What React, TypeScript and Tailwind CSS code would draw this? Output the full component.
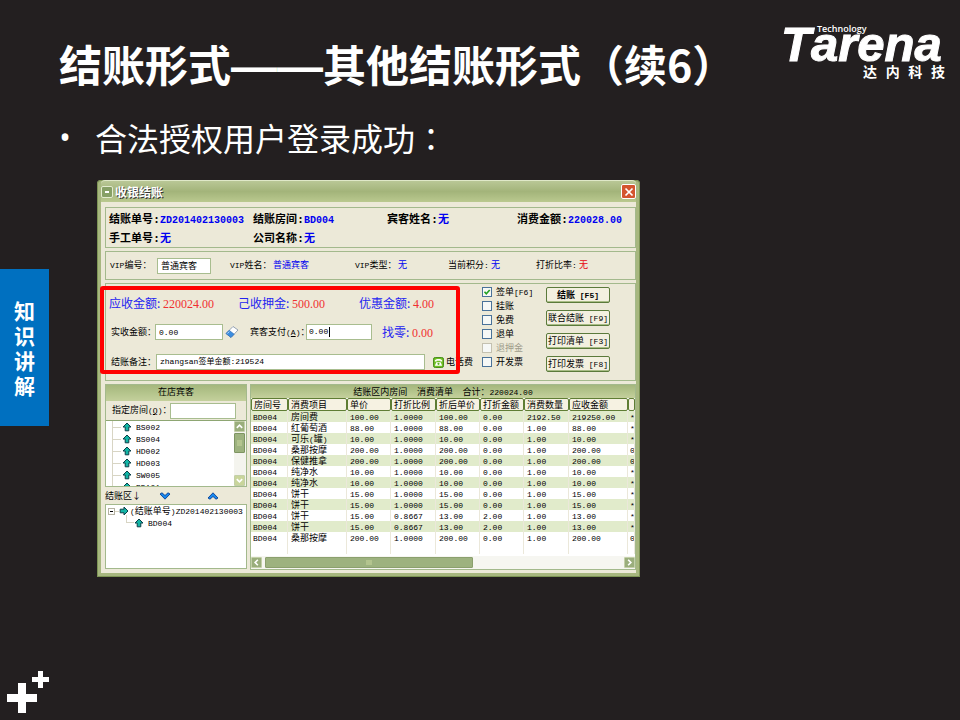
import React from "react";

const SMALL = "text-[9px] leading-3";

/** Splits a string so Latin runs use the narrow monospaced face and Chinese runs the CJK one. */
function Mixed({ text }: { text: string }) {
  const parts = text.match(/[\x20-\x7e]+|[^\x20-\x7e]+/g) ?? [];
  return (
    <>
      {parts.map((p, i) =>
        /^[\x20-\x7e]/.test(p) ? (
          <span key={i} className="whitespace-pre font-['Liberation_Mono',monospace] text-[8px]">
            {p}
          </span>
        ) : (
          <span key={i}>{p}</span>
        ),
      )}
    </>
  );
}

function Logo() {
  return (
    <div className="relative w-[164px] shrink-0 text-white" aria-label="Tarena Technology 达内科技">
      <div className="flex items-baseline font-['Liberation_Sans',sans-serif] text-[49px] font-bold italic leading-[38px] [-webkit-text-stroke:1px_white]">
        <span>T</span>
        <span>arena</span>
      </div>
      <span className="absolute left-[36px] top-0 font-['Open_Sans',sans-serif] text-[9px] font-semibold leading-[8px]">
        Technology
      </span>
      <div className="ml-auto flex w-[82px] justify-between text-[14px] font-bold leading-[16px]">
        <span>达</span>
        <span>内</span>
        <span>科</span>
        <span>技</span>
      </div>
    </div>
  );
}

const summary = [
  { label: "结账单号:", value: "ZD201402130003" },
  { label: "结账房间:", value: "BD004" },
  { label: "宾客姓名:", value: "无" },
  { label: "消费金额:", value: "220028.00" },
  { label: "手工单号:", value: "无" },
  { label: "公司名称:", value: "无" },
];

function Summary() {
  return (
    <section className="grid h-[41px] grid-cols-[144px_134px_130px_1fr] border border-[#a3b98c] px-[3px] py-px text-[11px] font-bold leading-[18px]">
      {summary.map((s) => (
        <div key={s.label} className="flex h-[18px] items-baseline whitespace-nowrap">
          <span className="text-black">{s.label.slice(0, -1)}</span>
          <span className="w-[7px] text-center">:</span>
          <span className={s.value === "无" ? "text-[#0000f0]" : "font-['Liberation_Mono',monospace] text-[10px] text-[#0000f0]"}>
            {s.value}
          </span>
        </div>
      ))}
    </section>
  );
}

function VipRow() {
  return (
    <section className={`grid h-[29px] grid-cols-[120px_125px_93px_88px_1fr] items-center border border-[#a3b98c] pl-1 ${SMALL}`}>
      <div className="flex items-center">
        <label htmlFor="vip-no" className="w-[47px]"><Mixed text="VIP编号：" /></label>
        <input id="vip-no" defaultValue="普通宾客" className="h-4 w-[54px] border border-[#a8bd8f] bg-white px-[3px] outline-none" />
      </div>
      <div className="flex"><span className="w-[43px]"><Mixed text="VIP姓名：" /></span><span className="text-[#0000f0]">普通宾客</span></div>
      <div className="flex"><span className="w-[43px]"><Mixed text="VIP类型：" /></span><span className="text-[#0000f0]">无</span></div>
      <div className="flex"><span className="w-[43px]"><Mixed text="当前积分:" /></span><span className="text-[#0000f0]">无</span></div>
      <div className="flex"><span className="w-[43px]"><Mixed text="打折比率:" /></span><span className="text-red-600">无</span></div>
    </section>
  );
}

function Amount({ label, value }: { label: string; value: string }) {
  return (
    <div className="flex items-baseline whitespace-nowrap text-[12px] leading-4">
      <span className="text-[#2424f0]">{label}</span>
      <span className="w-[6px] text-[#2424f0]">:</span>
      <span className="font-['Liberation_Serif',serif] text-[12px] text-[#f03030]">{value}</span>
    </div>
  );
}

function EraserIcon() {
  return (
    <svg viewBox="0 0 14 14" className="h-[14px] w-[14px]" aria-hidden="true">
      <path d="M1 8.5 8 1.5l5 3.5-7 7.5z" fill="#fff" stroke="#7c8ea6" strokeWidth="0.8" />
      <path d="M1 8.5 4.2 5.3l5 3.9L6 12.5z" fill="#3b8ee0" stroke="#2a64ab" strokeWidth="0.6" />
      <path d="m2.4 8.5 1.9-1.9" stroke="#b9dcff" />
    </svg>
  );
}

function PhoneIcon() {
  return (
    <svg viewBox="0 0 12 12" className="h-[11px] w-[11px]" aria-hidden="true">
      <rect x="0.5" y="0.5" width="11" height="11" rx="2" fill="#6fbf22" stroke="#3c8410" />
      <path d="M2 5V3.8C3.6 1.8 8.4 1.8 10 3.8V5H8V4.2H4V5z" fill="#fff" />
      <path d="M3.6 5.6h4.8L10 9.5H2z" fill="#fff" />
      <circle cx="6" cy="7.4" r="1.2" fill="#5aad1c" />
    </svg>
  );
}

const field = "h-4 border border-[#a8bd8f] bg-white px-[3px] font-['Liberation_Mono',monospace] text-[8px] leading-3 outline-none";

const options = [
  { id: "sign", label: "签单[F6]", checked: true },
  { id: "credit", label: "挂账" },
  { id: "free", label: "免费" },
  { id: "refund", label: "退单" },
  { id: "deposit", label: "退押金", disabled: true },
  { id: "invoice", label: "开发票" },
];

const actions = ["结账 [F5]", "联合结账 [F9]", "打印清单 [F3]", "打印发票 [F8]"];

function Payment() {
  return (
    <section className="flex h-[98px] border border-[#a3b98c]">
      <div className={`w-[376px] pl-[3px] ${SMALL}`}>
        <div className="mt-[11px] grid h-4 grid-cols-[129px_121px_1fr]">
          <Amount label="应收金额" value="220024.00" />
          <Amount label="己收押金" value="500.00" />
          <Amount label="优惠金额" value="4.00" />
        </div>
        <div className="mt-[13px] flex h-4 items-center pl-[2px]">
          <label htmlFor="paid" className="w-11 whitespace-nowrap">实收金额：</label>
          <input id="paid" defaultValue="0.00" className={`${field} w-[68px]`} />
          <span className="ml-[2px] w-[25px]"><EraserIcon /></span>
          <label htmlFor="guest-pay" className="w-14 whitespace-nowrap">
            宾客支付<span className="font-['Liberation_Mono',monospace] text-[8px]">(<u>A</u>)</span>：
          </label>
          <span className="flex h-4 w-[66px] items-center border border-[#a8bd8f] bg-white pl-[2px]">
            <input id="guest-pay" defaultValue="0.00" className="h-3 w-5 font-['Liberation_Mono',monospace] text-[8px] outline-none" />
            <span className="h-[10px] w-px bg-black" />
          </span>
          <span className="ml-[10px]"><Amount label="找零" value="0.00" /></span>
        </div>
        <div className="mt-[14px] flex h-4 items-center pl-[2px]">
          <label htmlFor="remark" className="w-[45px] whitespace-nowrap">结账备注：</label>
          <div className="flex h-4 w-[269px] items-center border border-[#a8bd8f] bg-white px-[3px]">
            <input id="remark" defaultValue="zhangsan签单金额:219524" className="h-3 w-full font-['Liberation_Mono','Noto_Sans_CJK_SC',monospace] text-[8px] leading-3 outline-none" />
          </div>
          <span className="ml-2 flex items-center gap-[2px] whitespace-nowrap"><PhoneIcon />电话费</span>
        </div>
      </div>
      <div className={`w-16 pt-px ${SMALL}`}>
        {options.map((o) => (
          <label key={o.id} htmlFor={o.id} className={`flex h-[14px] items-center gap-1 whitespace-nowrap ${o.disabled ? "text-[#a09d8c]" : ""}`}>
            <span className="relative flex h-[10px] w-[10px]">
              <input
                id={o.id}
                type="checkbox"
                defaultChecked={o.checked}
                disabled={o.disabled}
                className="peer h-[10px] w-[10px] appearance-none border border-[#4a7299] bg-[#f6f8f6] disabled:border-[#c4c1b0]"
              />
              <svg viewBox="0 0 10 10" className="pointer-events-none absolute inset-0 hidden peer-checked:block" aria-hidden="true">
                <path d="M2.5 4.8 4.3 6.8 7.7 3" fill="none" stroke="#21a121" strokeWidth="1.6" />
              </svg>
            </span>
            <span><Mixed text={o.label} /></span>
          </label>
        ))}
      </div>
      <div className="flex w-16 flex-col gap-[7px] pt-[3px]">
        {actions.map((a, i) => (
          <button
            key={a}
            type="button"
            className={`h-4 whitespace-nowrap rounded-[2px] border border-[#5b7a3b] bg-[#f3f0e0] shadow-[inset_0_-1px_0_#a9bd86] ${SMALL} ${i === 0 ? "font-bold" : ""}`}
          >
            <Mixed text={a} />
          </button>
        ))}
      </div>
    </section>
  );
}

function ArrowIcon({ right = false }: { right?: boolean }) {
  return (
    <svg viewBox="0 0 10 10" className={`h-[10px] w-[10px] shrink-0 ${right ? "rotate-90" : ""}`} aria-hidden="true">
      <path d="M5 1 9 5H6.8V8.8H3.2V5H1z" fill="#12b5a5" stroke="#0a3f48" strokeWidth="1" />
    </svg>
  );
}

function Chevron({ dir, className = "" }: { dir: "up" | "down" | "left" | "right"; className?: string }) {
  const d = { up: "M2 6.5 5 3.5 8 6.5", down: "M2 3.5 5 6.5 8 3.5", left: "M6.5 2 3.5 5 6.5 8", right: "M3.5 2 6.5 5 3.5 8" }[dir];
  return (
    <svg viewBox="0 0 10 10" className={className} aria-hidden="true">
      <path d={d} fill="none" stroke="currentColor" strokeWidth="1.8" />
    </svg>
  );
}

function ScrollButton({ dir, light = false }: { dir: "up" | "down" | "left" | "right"; light?: boolean }) {
  return (
    <button type="button" aria-label={dir} className={`flex h-[11px] w-[11px] shrink-0 items-center justify-center rounded-[1px] border border-[#c3cfa8] text-white ${light ? "bg-[#c9d59b]" : "bg-[#9aae7c]"}`}>
      <Chevron dir={dir} className="h-[9px] w-[9px]" />
    </button>
  );
}

const rooms = ["BS002", "BS004", "HD002", "HD003", "SW005", "BD101"];
const panelHead = "bg-linear-to-b from-[#a5b77d] via-[#b4c48c] to-[#c4d09c] text-center text-[9px]";

function GuestPanel() {
  return (
    <section className={`flex w-[142px] shrink-0 flex-col ${SMALL}`}>
      <div className="border border-[#a3b98c]">
        <h3 className={`${panelHead} h-4 leading-[14px]`}>在店宾客</h3>
        <div className="flex h-[19px] items-center pl-[6px]">
          <label htmlFor="room" className="w-[58px] whitespace-nowrap">
            指定房间<span className="font-['Liberation_Mono',monospace] text-[8px]">(<u>Q</u>)</span>：
          </label>
          <input id="room" className={`${field} w-[66px]`} />
        </div>
        <div className="flex h-[66px] overflow-hidden border-t border-[#8ea673] bg-white">
          <ul className="ml-[6px] flex-1 border-l border-[#d8d5c4]">
            {rooms.map((r) => (
              <li key={r} className="flex h-3 items-center">
                <span className="mr-px h-px w-2 bg-[#d8d5c4]" />
                <ArrowIcon />
                <span className="ml-1"><Mixed text={r} /></span>
              </li>
            ))}
          </ul>
          <div className="flex w-3 flex-col bg-[#f4f4ee]">
            <ScrollButton dir="up" />
            <div className="mt-px flex h-5 w-[11px] items-center justify-center rounded-[1px] border border-[#7e9462] bg-[#9db27f]">
              <span className="h-[6px] w-[5px] bg-[#b3c48e]" />
            </div>
            <div className="mt-auto"><ScrollButton dir="down" light /></div>
          </div>
        </div>
      </div>
      <div className="flex h-[17px] items-center">
        <span className="w-[54px]">结账区↓</span>
        <button type="button" aria-label="移下" className="w-12">
          <svg viewBox="0 0 12 8" className="h-2 w-3"><path d="M1 2 3 .8 6 3.5 9 .8 11 2 6 7.2z" fill="#1688ee" stroke="#0a3f94" strokeWidth=".9" /></svg>
        </button>
        <button type="button" aria-label="移上">
          <svg viewBox="0 0 12 8" className="h-2 w-3"><path d="M1 6 3 7.2 6 4.5 9 7.2 11 6 6 .8z" fill="#1688ee" stroke="#0a3f94" strokeWidth=".9" /></svg>
        </button>
      </div>
      <ul className="h-[65px] overflow-hidden border border-[#a3b98c] bg-white">
        <li className="flex h-3 items-center whitespace-nowrap pl-[2px]">
          <span className="flex h-[7px] w-[7px] shrink-0 items-center justify-center border border-[#b5b2a2]"><span className="h-px w-[3px] bg-black" /></span>
          <span className="h-px w-1 bg-[#d8d5c4]" />
          <ArrowIcon right />
          <span className="ml-px"><Mixed text="(结账单号)ZD201402130003" /></span>
        </li>
        <li className="flex h-3 items-center pl-5">
          <span className="-mt-2 h-2 w-2 border-b border-l border-[#d8d5c4]" />
          <ArrowIcon />
          <span className="ml-1"><Mixed text="BD004" /></span>
        </li>
      </ul>
    </section>
  );
}

const columns = ["房间号", "消费项目", "单价", "打折比例", "折后单价", "打折金额", "消费数量", "应收金额", ""];
const rows = [
  ["房间费", "100.00", "1.0000", "100.00", "0.00", "2192.50", "219250.00", "*"],
  ["红葡萄酒", "88.00", "1.0000", "88.00", "0.00", "1.00", "88.00", "*"],
  ["可乐(罐)", "10.00", "1.0000", "10.00", "0.00", "1.00", "10.00", "*"],
  ["桑那按摩", "200.00", "1.0000", "200.00", "0.00", "1.00", "200.00", "0"],
  ["保健推拿", "200.00", "1.0000", "200.00", "0.00", "1.00", "200.00", "0"],
  ["纯净水", "10.00", "1.0000", "10.00", "0.00", "1.00", "10.00", "*"],
  ["纯净水", "10.00", "1.0000", "10.00", "0.00", "1.00", "10.00", "*"],
  ["饼干", "15.00", "1.0000", "15.00", "0.00", "1.00", "15.00", "*"],
  ["饼干", "15.00", "1.0000", "15.00", "0.00", "1.00", "15.00", "*"],
  ["饼干", "15.00", "0.8667", "13.00", "2.00", "1.00", "13.00", "*"],
  ["饼干", "15.00", "0.8667", "13.00", "2.00", "1.00", "13.00", "*"],
  ["桑那按摩", "200.00", "1.0000", "200.00", "0.00", "1.00", "200.00", "0"],
  ["", "", "", "", "", "", "", ""],
];

function BillPanel() {
  return (
    <section className="flex min-w-0 flex-1 flex-col border border-[#a3b98c] bg-white">
      <h3 className={`${panelHead} h-[13px] whitespace-pre leading-[13px]`}>
        <Mixed text="结账区内房间  消费清单  合计：220024.00" />
      </h3>
      <table className="w-full table-fixed border-separate border-spacing-0 text-left text-[9px] leading-[11px]">
        <colgroup>
          <col className="w-[37px]" />
          <col className="w-[59px]" />
          <col className="w-[44px]" />
          <col className="w-[45px]" />
          <col className="w-[44px]" />
          <col className="w-[44px]" />
          <col className="w-[45px]" />
          <col className="w-[59px]" />
          <col />
        </colgroup>
        <thead>
          <tr className="h-[13px]">
            {columns.map((c, i) => (
              <th key={i} scope="col" className="h-[13px] overflow-hidden whitespace-nowrap rounded-[2px] border border-[#5f7d34] bg-[#f6f2e2] p-0 pl-[2px] font-normal">
                {c}
              </th>
            ))}
          </tr>
        </thead>
        <tbody>
          {rows.map((r, i) => (
            <tr key={i} className={`h-[11px] ${i % 2 === 0 && r[0] ? "bg-[#e1ebcb]" : "bg-white"}`}>
              {[r[0] ? "BD004" : "", ...r].map((c, j) => (
                <td key={j} className={`h-[11px] overflow-hidden whitespace-nowrap border-r border-[#ebe8da] p-0 ${j === 0 || j === 8 ? "pl-[2px]" : "pl-[3px]"}`}>
                  <div className="h-[11px]"><Mixed text={c} /></div>
                </td>
              ))}
            </tr>
          ))}
        </tbody>
      </table>
      <div className="mt-auto flex h-[13px] items-center bg-[#f6f6f1]">
        <ScrollButton dir="left" />
        <div className="ml-[3px] flex h-[11px] w-[208px] items-center justify-center rounded-[1px] border border-[#8ba06e] bg-[#9db27f]">
          <span className="h-[5px] w-[6px] bg-[#b3c48e]" />
        </div>
        <div className="ml-auto"><ScrollButton dir="right" /></div>
      </div>
    </section>
  );
}

function CheckoutWindow() {
  return (
    <div className="relative w-full max-w-[543px] rounded-t-[4px] bg-[#a7b77f] p-1 pt-0 text-black shadow-[inset_0_0_0_1px_#7d9455]">
      <header className="flex h-[22px] items-center rounded-t-[4px] border-t border-[#dfe8c8] bg-linear-to-b from-[#b9c796] via-[#a3b47a] to-[#bac98f]">
        <span className="flex h-3 w-3 items-center justify-center rounded-[2px] border border-[#e3ebcf] bg-[#87a066]">
          <span className="h-[2px] w-1 bg-white" />
        </span>
        <h2 className="ml-[2px] flex-1 text-[12px] font-bold leading-5 text-white [text-shadow:1px_1px_0_#333]">收银结账</h2>
        <button type="button" aria-label="关闭" className="flex h-[15px] w-[15px] items-center justify-center rounded-[2px] border border-white bg-[#d4552f]">
          <svg viewBox="0 0 10 10" className="h-[10px] w-[10px]"><path d="m1.5 1.5 7 7m0-7-7 7" stroke="#fff" strokeWidth="1.7" /></svg>
        </button>
      </header>
      <div className="flex flex-col gap-[3px] bg-[#ece9d8] pb-[3px] pl-1 pt-[5px]">
        <Summary />
        <VipRow />
        <Payment />
        <div className="flex h-[186px] gap-[3px]">
          <GuestPanel />
          <BillPanel />
        </div>
      </div>
      <div className="pointer-events-none absolute left-[3px] top-[106px] h-[88px] w-[360px] rounded-[3px] border-4 border-[#ff0000]" />
    </div>
  );
}

export default function App() {
  return (
    <div lang="zh-CN" className="flex min-h-screen bg-[#231f20] font-['Noto_Sans_CJK_SC',sans-serif] text-white">
      <aside className="flex w-[49px] shrink-0 flex-col">
        <div className="mt-[269px] flex h-[157px] flex-col items-center justify-center bg-[#0070c0] text-[21px] font-bold leading-[25px]">
          <span>知</span>
          <span>识</span>
          <span>讲</span>
          <span>解</span>
        </div>
        <svg viewBox="0 0 49 50" className="mt-auto h-[50px] w-[49px]" aria-hidden="true">
          <path d="M18 13h8v11h11v8H26v11h-8V32H7v-8h11z" fill="#fff" />
          <path d="M38 1h5v6h6v5h-6v6h-5v-6h-6V7h6z" fill="#fff" />
        </svg>
      </aside>
      <main className="min-w-0 flex-1 pl-[10px]">
        <header className="flex h-[93px] items-start justify-between pr-[15px] pt-[25px]">
          <h1 className="mt-2 whitespace-nowrap text-[43px] font-bold leading-[60px]">
            结账形式<span className="font-['Liberation_Sans',sans-serif] text-[46px]">——</span>其他结账形式（续6）
          </h1>
          <Logo />
        </header>
        <ul className="mt-[20px]">
          <li className="flex text-[32px] leading-[48px]">
            <span className="w-9 font-['Open_Sans',sans-serif]">•</span>
            <span>
              合法授权用户登录成功<span lang="zh-TW" className="font-['Noto_Sans_CJK_TC',sans-serif]">：</span>
            </span>
          </li>
        </ul>
        <div className="ml-[38px] mt-[19px]">
          <CheckoutWindow />
        </div>
      </main>
    </div>
  );
}
